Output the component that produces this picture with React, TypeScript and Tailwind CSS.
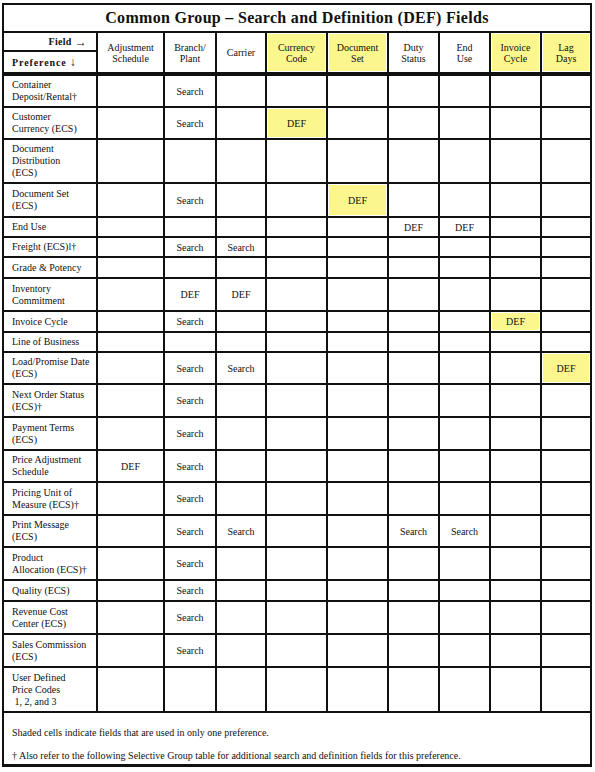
const cols = [
    { label: ["Adjustment", "Schedule"], shaded: false },
    { label: ["Branch/", "Plant"], shaded: false },
    { label: ["Carrier"], shaded: false },
    { label: ["Currency", "Code"], shaded: true },
    { label: ["Document", "Set"], shaded: true },
    { label: ["Duty", "Status"], shaded: false },
    { label: ["End", "Use"], shaded: false },
    { label: ["Invoice", "Cycle"], shaded: true },
    { label: ["Lag", "Days"], shaded: true },
]

// cell values by column index; a "*" suffix marks a shaded cell
type Row = { name: string[]; h: string; cells: Record<number, string> }

const rows: Row[] = [
    { name: ["Container", "Deposit/Rental†"], h: "h-[30px]", cells: { 1: "Search" } },
    { name: ["Customer", "Currency (ECS)"], h: "h-[30px]", cells: { 1: "Search", 3: "DEF*" } },
    { name: ["Document", "Distribution", "(ECS)"], h: "h-[42px]", cells: {} },
    { name: ["Document Set", "(ECS)"], h: "h-[32px]", cells: { 1: "Search", 4: "DEF*" } },
    { name: ["End Use"], h: "h-[18px]", cells: { 5: "DEF", 6: "DEF" } },
    { name: ["Freight (ECS)l†"], h: "h-[18px]", cells: { 1: "Search", 2: "Search" } },
    { name: ["Grade & Potency"], h: "h-[19px]", cells: {} },
    { name: ["Inventory", "Commitment"], h: "h-[31px]", cells: { 1: "DEF", 2: "DEF" } },
    { name: ["Invoice Cycle"], h: "h-[19px]", cells: { 1: "Search", 7: "DEF*" } },
    { name: ["Line of Business"], h: "h-[18px]", cells: {} },
    { name: ["Load/Promise Date", "(ECS)"], h: "h-[30px]", cells: { 1: "Search", 2: "Search", 8: "DEF*" } },
    { name: ["Next Order Status", "(ECS)†"], h: "h-[31px]", cells: { 1: "Search" } },
    { name: ["Payment Terms", "(ECS)"], h: "h-[31px]", cells: { 1: "Search" } },
    { name: ["Price Adjustment", "Schedule"], h: "h-[30px]", cells: { 0: "DEF", 1: "Search" } },
    { name: ["Pricing Unit of", "Measure (ECS)†"], h: "h-[31px]", cells: { 1: "Search" } },
    { name: ["Print Message", "(ECS)"], h: "h-[30px]", cells: { 1: "Search", 2: "Search", 5: "Search", 6: "Search" } },
    { name: ["Product", "Allocation (ECS)†"], h: "h-[31px]", cells: { 1: "Search" } },
    { name: ["Quality (ECS)"], h: "h-[19px]", cells: { 1: "Search" } },
    { name: ["Revenue Cost", "Center (ECS)"], h: "h-[31px]", cells: { 1: "Search" } },
    { name: ["Sales Commission", "(ECS)"], h: "h-[31px]", cells: { 1: "Search" } },
    { name: ["User Defined", "Price Codes", "\u00a01, 2, and 3"], h: "h-[43px]", cells: {} },
]

const grid = "grid grid-cols-[92px_65px_50px_48px_59px_59px_49px_49px_49px_48px] gap-[2px]"
const shade = "bg-[#fcf68e]"

function Cell({ value }: { value?: string }) {
    const shaded = value?.endsWith("*")
    const text = value?.replace("*", "")
    if (shaded) {
        return (
            <div className="bg-white p-px">
                <div className={`${shade} h-full flex items-center justify-center`}>{text}</div>
            </div>
        )
    }
    return <div className="bg-white flex items-center justify-center">{text}</div>
}

export default function App() {
    return (
        <div className="min-h-screen bg-white pt-[3px] pl-[2px] font-['Liberation_Serif',serif] text-[10px] text-[#111]">
            <div className="w-[590px] bg-[#111] pt-[2px] px-[2px] pb-[3px] flex flex-col gap-[2px]">
                <div className="bg-white h-[26px] flex items-center justify-center text-[16px] font-bold tracking-[0.3px]">
                    Common Group – Search and Definition (DEF) Fields
                </div>

                <div className={`${grid} h-[39px] mb-[2px]`}>
                    <div className="bg-white flex flex-col font-bold">
                        <div className="h-[19px] border-b-2 border-[#111] flex items-center justify-end gap-[3px] pr-[9px] tracking-[0.3px]">
                            <span>Field</span>
                            <span className="text-[12px] leading-none font-normal">→</span>
                        </div>
                        <div className="flex-1 flex items-center gap-[3px] pl-[8px]">
                            <span className="tracking-[0.9px]">Preference</span>
                            <span className="text-[12px] leading-none font-normal">↓</span>
                        </div>
                    </div>
                    {cols.map((c, i) => (
                        <div key={i} className={c.shaded ? "bg-white p-px" : "bg-white"}>
                            <div className={`${c.shaded ? shade : ""} h-full flex flex-col items-center justify-center leading-[11px] text-center`}>
                                {c.label.map((l) => <span key={l}>{l}</span>)}
                            </div>
                        </div>
                    ))}
                </div>

                {rows.map((r) => (
                    <div key={r.name.join(" ")} className={`${grid} ${r.h}`}>
                        <div className="bg-white flex flex-col justify-center pl-[8px] leading-[12px] whitespace-pre">
                            {r.name.map((n) => <span key={n}>{n}</span>)}
                        </div>
                        {cols.map((_, i) => <Cell key={i} value={r.cells[i]} />)}
                    </div>
                ))}

                <div className="bg-white h-[51px] flex flex-col pl-[8px] pt-[14px] leading-[12px]">
                    <p>Shaded cells indicate fields that are used in only one preference.</p>
                    <p className="mt-[11px]">† Also refer to the following Selective Group table for additional search and definition fields for this preference.</p>
                </div>
            </div>
        </div>
    )
}
